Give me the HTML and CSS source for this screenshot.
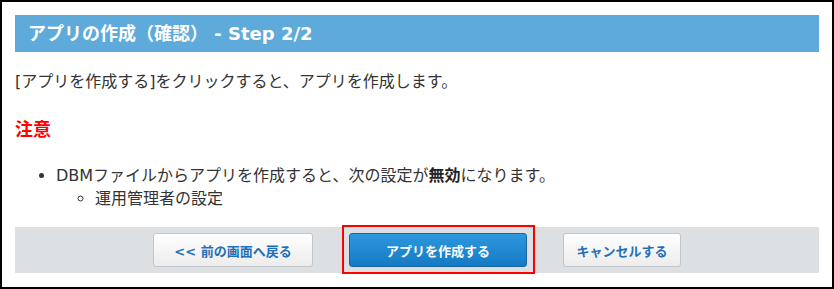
FILE: index.html
```html
<!DOCTYPE html>
<html lang="ja">
<head>
  <meta charset="UTF-8">
  <title>アプリの作成（確認）</title>
  <link rel="stylesheet" href="styles.css">
</head>
<body>
  <div class="page">
    <h1 class="title">アプリの作成（確認） - Step 2/2</h1>

    <p class="lead">[アプリを作成する]をクリックすると、アプリを作成します。</p>

    <h2 class="notice">注意</h2>
    <ul class="notes">
      <li>DBMファイルからアプリを作成すると、次の設定が<strong>無効</strong>になります。
        <ul>
          <li>運用管理者の設定</li>
        </ul>
      </li>
    </ul>

    <div class="actions">
      <button type="button" class="btn btn-back">&lt;&lt; 前の画面へ戻る</button>
      <button type="button" class="btn btn-primary">アプリを作成する</button>
      <button type="button" class="btn btn-cancel">キャンセルする</button>
    </div>
  </div>
</body>
</html>
```

FILE: styles.css
```css
body {
  margin: 0;
  font-family: "DejaVu Sans", "Noto Sans CJK JP", sans-serif;
  color: #333;
  background-color: #fff;
}

.page {
  box-sizing: border-box;
  width: 834px;
  height: 289px;
  border: 2px solid #000;
  padding: 13px 13px 0;
}

.title {
  margin: 0;
  height: 37px;
  line-height: 37px;
  padding-left: 13px;
  background-color: #5eaadb;
  color: #fff;
  font-size: 18px;
  font-weight: bold;
}

.lead {
  margin: 18px 0 0;
  font-size: 16px;
  line-height: 24px;
}

.notice {
  margin: 24px 0 0;
  font-size: 18px;
  line-height: 24px;
  font-weight: bold;
  color: #f00;
}

.notes {
  margin: 22px 0 0;
  padding-left: 41px;
  font-size: 16px;
  line-height: 23px;
}

.notes ul {
  margin: 0;
  padding-left: 39px;
  list-style: circle;
}

.notes strong {
  color: #222;
}

.actions {
  display: flex;
  justify-content: center;
  gap: 36px;
  margin-top: 17px;
  height: 46px;
  box-sizing: border-box;
  padding-top: 6px;
  background-color: #dce0e3;
}

.btn {
  box-sizing: border-box;
  height: 34px;
  border-radius: 3px;
  font-family: "DejaVu Sans", "Noto Sans CJK JP", sans-serif;
  font-size: 13px;
  font-weight: bold;
  cursor: pointer;
  padding: 0;
}

.btn-back,
.btn-cancel {
  border: 1px solid #c2c6c9;
  background: linear-gradient(#ffffff, #ececec);
  color: #1f6fb6;
}

.btn-back {
  width: 160px;
}

.btn-cancel {
  width: 118px;
}

.btn-primary {
  position: relative;
  width: 178px;
  border: 1px solid #1a64a0;
  background: linear-gradient(#2c98de, #157ac5);
  color: #fff;
}

/* red highlight frame drawn over the button */
.btn-primary::after {
  content: "";
  position: absolute;
  top: -9px;
  right: -9px;
  bottom: -8px;
  left: -8px;
  border: 2px solid #f00;
}
```
